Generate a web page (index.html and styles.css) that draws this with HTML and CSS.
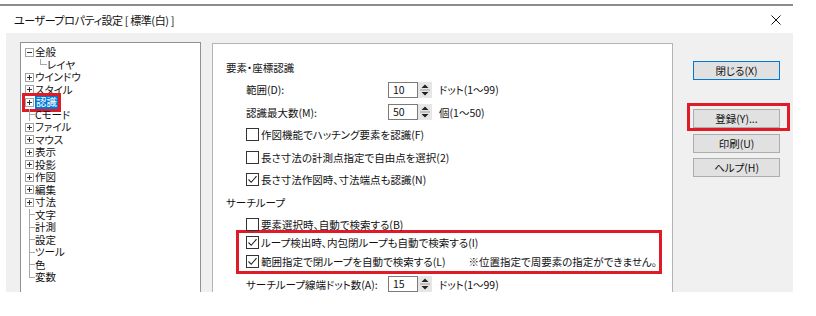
FILE: index.html
```html
<!DOCTYPE html>
<html lang="ja">
<head>
    <meta charset="UTF-8">
    <title>ユーザープロパティ設定</title>
    <link rel="stylesheet" href="styles.css">
</head>
<body>
<div class="window">
    <div class="titlebar">
        <span class="title">ユーザープロパティ設定 [ 標準(白) ]</span>
        <svg class="close" width="10" height="10" viewBox="0 0 10 10">
            <path d="M0.5 0.5 L9.5 9.5 M9.5 0.5 L0.5 9.5" stroke="#111" stroke-width="1" fill="none"/>
        </svg>
    </div>

    <div class="dialog">
        <!-- category tree -->
        <ul class="tree">
            <li><i class="box minus"></i>全般</li>
            <li class="child"><i class="elbow"></i>レイヤ</li>
            <li><i class="box plus"></i>ウインドウ</li>
            <li><i class="box plus"></i>スタイル</li>
            <li><span class="marked"><i class="box plus"></i><span class="selected">認識</span></span></li>
            <li><i class="twig"></i>Cモード</li>
            <li><i class="box plus"></i>ファイル</li>
            <li><i class="box plus"></i>マウス</li>
            <li><i class="box plus"></i>表示</li>
            <li><i class="box plus"></i>投影</li>
            <li><i class="box plus"></i>作図</li>
            <li><i class="box plus"></i>編集</li>
            <li><i class="box plus"></i>寸法</li>
            <li><i class="twig"></i>文字</li>
            <li><i class="twig"></i>計測</li>
            <li><i class="twig"></i>設定</li>
            <li><i class="twig"></i>ツール</li>
            <li><i class="twig"></i>色</li>
            <li><i class="twig end"></i>変数</li>
        </ul>

        <!-- settings page -->
        <div class="page">
            <div class="group-title">要素・座標認識</div>
            <div class="row">
                <label>範囲(D):</label>
                <span class="spin"><span class="value">10</span>
                    <svg class="arrows" width="14" height="16" viewBox="0 0 14 16">
                        <rect x="0" y="0" width="14" height="16" fill="#e6e6e6"/>
                        <path d="M3.5 6 L7 2.5 L10.5 6 Z M3.5 10 L7 13.5 L10.5 10 Z" fill="#222"/>
                        <path d="M2 8 H12" stroke="#9a9a9a" stroke-width="1"/>
                    </svg>
                </span>
                <span class="unit">ドット(1〜99)</span>
            </div>
            <div class="row">
                <label>認識最大数(M):</label>
                <span class="spin"><span class="value">50</span>
                    <svg class="arrows" width="14" height="16" viewBox="0 0 14 16">
                        <rect x="0" y="0" width="14" height="16" fill="#e6e6e6"/>
                        <path d="M3.5 6 L7 2.5 L10.5 6 Z M3.5 10 L7 13.5 L10.5 10 Z" fill="#222"/>
                        <path d="M2 8 H12" stroke="#9a9a9a" stroke-width="1"/>
                    </svg>
                </span>
                <span class="unit">個(1〜50)</span>
            </div>
            <div class="row"><i class="cb"></i>作図機能でハッチング要素を認識(F)</div>
            <div class="row"><i class="cb"></i>長さ寸法の計測点指定で自由点を選択(2)</div>
            <div class="row">
                <i class="cb"><svg width="11" height="11" viewBox="0 0 11 11"><path d="M1.5 5.5 L4.2 8.3 L9.5 2.2" stroke="#222" stroke-width="1.1" fill="none"/></svg></i>長さ寸法作図時、寸法端点も認識(N)
            </div>

            <div class="group-title">サーチループ</div>
            <div class="row"><i class="cb"></i>要素選択時、自動で検索する(B)</div>
            <div class="marked-rows">
                <div class="row">
                    <i class="cb"><svg width="11" height="11" viewBox="0 0 11 11"><path d="M1.5 5.5 L4.2 8.3 L9.5 2.2" stroke="#222" stroke-width="1.1" fill="none"/></svg></i>ループ検出時、内包閉ループも自動で検索する(I)
                </div>
                <div class="row">
                    <i class="cb"><svg width="11" height="11" viewBox="0 0 11 11"><path d="M1.5 5.5 L4.2 8.3 L9.5 2.2" stroke="#222" stroke-width="1.1" fill="none"/></svg></i>範囲指定で閉ループを自動で検索する(L)
                    <span class="note">※位置指定で周要素の指定ができません。</span>
                </div>
            </div>
            <div class="row last">
                <label>サーチループ線端ドット数(A):</label>
                <span class="spin"><span class="value">15</span>
                    <svg class="arrows" width="14" height="16" viewBox="0 0 14 16">
                        <rect x="0" y="0" width="14" height="16" fill="#e6e6e6"/>
                        <path d="M3.5 6 L7 2.5 L10.5 6 Z M3.5 10 L7 13.5 L10.5 10 Z" fill="#222"/>
                        <path d="M2 8 H12" stroke="#9a9a9a" stroke-width="1"/>
                    </svg>
                </span>
                <span class="unit">ドット(1〜99)</span>
            </div>
        </div>

        <!-- dialog buttons -->
        <div class="buttons">
            <div class="btn default">閉じる(X)</div>
            <div class="marked-btn">
                <div class="btn">登録(Y)...</div>
            </div>
            <div class="btn print">印刷(U)</div>
            <div class="btn help">ヘルプ(H)</div>
        </div>
    </div>
</div>
</body>
</html>
```

FILE: styles.css
```css
* {
    box-sizing: border-box;
}

body {
    margin: 0;
    background-color: #fff;
    font-family: "Noto Sans CJK JP", "Noto Sans", sans-serif;
    font-size: 10.5px;
    font-feature-settings: "palt";
    color: #111;
}

.window {
    width: 793px;
    margin-top: 4px;
    border-top: 2px solid #8c8c8c;
}

.titlebar {
    display: flex;
    align-items: center;
    justify-content: space-between;
    height: 27px;
    padding: 0 12px 0 14px;
    background-color: #fff;
}

.title {
    font-size: 11px;
    letter-spacing: -0.4px;
}

.dialog {
    display: flex;
    align-items: flex-start;
    height: 259px;
    margin-left: 6px;
    padding: 9px 0 0 14px;
    background-color: #f0f0f0;
    overflow: hidden;
}

/* tree */

.tree {
    flex: none;
    width: 181px;
    height: 300px;
    margin: 0;
    padding: 3px 0 0 4px;
    list-style: none;
    background-color: #fff;
    border: 1px solid #8f9399;
}

.tree li {
    display: flex;
    align-items: center;
    height: 12.5px;
    line-height: 12.5px;
    white-space: nowrap;
}

.box {
    flex: none;
    width: 9px;
    height: 9px;
    margin-right: 1px;
    border: 1px solid #a3a3a3;
    background: linear-gradient(#333, #333) center / 5px 1px no-repeat;
}

.box.plus {
    background: linear-gradient(#333, #333) center / 5px 1px no-repeat,
                linear-gradient(#333, #333) center / 1px 5px no-repeat;
}

.twig {
    flex: none;
    align-self: stretch;
    width: 10px;
    background: linear-gradient(#a8a8a8, #a8a8a8) 4px 0 / 1px 100% no-repeat,
                linear-gradient(#a8a8a8, #a8a8a8) 4px 50% / 6px 1px no-repeat;
}

.twig.end {
    background: linear-gradient(#a8a8a8, #a8a8a8) 4px 0 / 1px 50% no-repeat,
                linear-gradient(#a8a8a8, #a8a8a8) 4px 50% / 6px 1px no-repeat;
}

.tree .child {
    padding-left: 10px;
}

.elbow {
    flex: none;
    align-self: stretch;
    width: 12px;
    background: linear-gradient(#a8a8a8, #a8a8a8) 5px 0 / 1px 50% no-repeat,
                linear-gradient(#a8a8a8, #a8a8a8) 5px 50% / 7px 1px no-repeat;
}

.marked {
    display: flex;
    align-items: center;
    height: 12.5px;
    outline: 3px solid #de1b26;
}

.selected {
    padding: 0 1px;
    background-color: #0078d7;
    color: #fff;
}

/* settings page */

.page {
    flex: none;
    width: 461px;
    height: 300px;
    margin: 1px 0 0 11px;
    padding: 12px 0 0 13px;
    background-color: #fff;
    border: 1px solid #b4b4b4;
}

.group-title {
    display: flex;
    align-items: center;
    height: 22.5px;
}

.row {
    display: flex;
    align-items: center;
    height: 22.5px;
    padding-left: 20px;
    white-space: nowrap;
}

.row label {
    width: 142px;
}

.spin {
    display: flex;
    height: 16px;
}

.value {
    width: 30px;
    height: 16px;
    padding-left: 4px;
    line-height: 14px;
    border: 1px solid #7a7a7a;
    background-color: #fff;
}

.unit {
    margin-left: 7px;
}

.cb {
    display: flex;
    align-items: center;
    justify-content: center;
    flex: none;
    width: 13px;
    height: 13px;
    margin-right: 2px;
    border: 1px solid #333;
    background-color: #fff;
}

.marked-rows {
    width: 426px;
    margin: -6px 0 0 10px;
    border: 3px solid #de1b26;
}

.marked-rows .row {
    height: 19px;
    padding-left: 7px;
}

.note {
    margin-left: auto;
    padding-right: 2px;
}

.row.last {
    height: 20px;
}

/* buttons */

.buttons {
    flex: none;
    display: flex;
    flex-direction: column;
    width: 87px;
    margin-left: 20px;
    padding-top: 19px;
}

.btn {
    height: 19px;
    line-height: 17px;
    text-align: center;
    border: 1px solid #adadad;
    background-color: #e1e1e1;
}

.btn.default {
    border-color: #0078d7;
}

.marked-btn {
    width: 103px;
    margin: 23px 0 0 -6px;
    padding: 3px 7px 0 3px;
    border: 3px solid #de1b26;
}

.btn.print {
    margin-top: 3px;
}

.btn.help {
    margin-top: 5px;
}
```
